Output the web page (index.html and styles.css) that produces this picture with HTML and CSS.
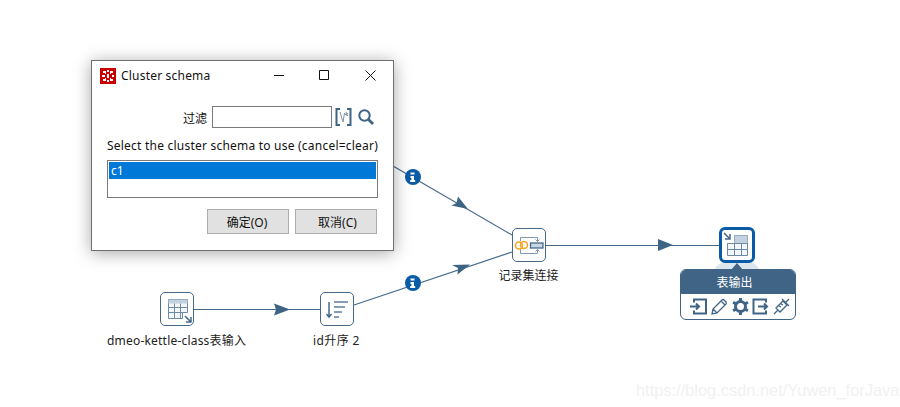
FILE: index.html
```html
<!DOCTYPE html>
<html lang="zh">
<head>
<meta charset="utf-8">
<title>Cluster schema</title>
<link rel="stylesheet" href="styles.css">
</head>
<body>
<main class="canvas">
  <svg class="hops" width="900" height="407" viewBox="0 0 900 407">
    <g class="hop">
      <path d="M393 166L512 235"/>
      <path d="M354 305L512 252"/>
      <path d="M194 309.500H320"/>
      <path d="M546 245.500H719"/>
    </g>
    <g class="arrow">
      <path d="M468 209L451.500 205.500L456.500 203L458 196.500Z"/>
      <path d="M470 264.500L452 265L458 268L457.500 274.500Z"/>
      <path d="M290 309.500L274 303.500L276 309.500L274 315.500Z"/>
      <path d="M673 245L658 239V251Z"/>
    </g>
    <g>
      <circle class="info" cx="413" cy="177" r="8"/>
      <path class="info-i" d="M410.500 172.500h4v2h-4zM410.500 176h3.500v4h1.200v2h-5v-2h1.200v-2h-.9z"/>
      <circle class="info" cx="413" cy="283" r="8"/>
      <path class="info-i" d="M410.500 278.500h4v2h-4zM410.500 282h3.500v4h1.200v2h-5v-2h1.200v-2h-.9z"/>
    </g>
  </svg>

  <div class="node node-input">
    <svg width="32" height="32" viewBox="0 0 32 32">
      <path class="ic-light" d="M7.500 6.500h19v13h-5v6h-14z"/>
      <path class="ic-head" d="M7.500 6.500h19v4h-19z"/>
      <path class="ic-line" d="M7.500 14.500h19M7.500 19.500h14M13.500 10.500v15M19.500 10.500v15"/>
      <path class="ic-arrow" d="M24 23l6 6M30 24v5h-5"/>
    </svg>
  </div>
  <div class="label label-input">dmeo-kettle-class表输入</div>

  <div class="node node-sort">
    <svg width="32" height="32" viewBox="0 0 32 32">
      <path class="ic-arrow" d="M8 9v15M5.500 21l2.500 3 2.500-3"/>
      <path class="ic-line-d" d="M13 9h14M13 14h11M13 19h8M13 24h5"/>
    </svg>
  </div>
  <div class="label label-sort">id升序 2</div>

  <div class="node node-join">
    <svg width="32" height="32" viewBox="0 0 32 32">
      <path class="ic-thin" d="M7.500 12V8.500h17v4M22.500 10.500l2 2 2-2M7.500 20v4.500h17v-4M22.500 22.500l2-2 2 2"/>
      <circle class="ic-ring" cx="6" cy="16.500" r="3.500"/>
      <circle class="ic-ring" cx="11" cy="16" r="3.500"/>
      <rect class="ic-bar" x="17.500" y="14" width="12.500" height="5"/>
    </svg>
  </div>
  <div class="label label-join">记录集连接</div>

  <div class="halo"></div>
  <div class="node node-output">
    <svg width="30" height="30" viewBox="0 0 30 30">
      <path class="ic-light" d="M5.500 13.500h7v-8h13v20h-20z"/>
      <path class="ic-head" d="M12.500 5.500h13v8h-13z"/>
      <path class="ic-line" d="M5.500 19.500h20M12.500 13.500v12M19.500 13.500v12M5.500 13.500h20"/>
      <path class="ic-arrow" d="M2 3l6 6M8 4v5H3"/>
    </svg>
  </div>

  <section class="popup">
    <div class="popup-title">表输出</div>
    <div class="popup-tools">
      <svg width="17" height="17" viewBox="0 0 17 17"><path class="tool" d="M4 4.500V1.500h12v14H4v-3M0 8.500h9M6 5.500l3 3-3 3"/></svg>
      <svg width="17" height="17" viewBox="0 0 17 17"><path class="tool-thin" d="M1 16l1-5L11 2a1.500 1.500 0 0 1 2 0l2 2a1.500 1.500 0 0 1 0 2L6 15zM2 11l4 4M10 3l4 4"/></svg>
      <svg width="17" height="17" viewBox="0 0 17 17"><circle class="tool-gear" cx="8.500" cy="8.500" r="5"/><path class="tool-teeth" d="M8.500 0v3M8.500 14v3M1.100 4.200l2.600 1.500M13.300 11.300l2.600 1.500M1.100 12.800l2.600-1.500M13.300 5.700l2.600-1.500"/></svg>
      <svg width="17" height="17" viewBox="0 0 17 17"><path class="tool" d="M14 4.500V1.500H1.500v14H14v-3M6 8.500h9M12 5.500l3 3-3 3"/></svg>
      <svg width="17" height="17" viewBox="0 0 17 17"><path class="tool-thin" d="M1 16l4-4M3 10l4 4 7-7-4-4zM9 1l7 7M13 4l3-3M6 8l2 1M8 6l2 1"/></svg>
    </div>
  </section>

  <div class="watermark">https://blog.csdn.net/Yuwen_forJava</div>

  <section class="dialog">
    <header class="titlebar">
      <svg class="app-icon" width="16" height="16" viewBox="0 0 16 16">
        <rect width="16" height="16" fill="#c80000"/>
        <path class="app-mark" d="M3 3h3v2H3zM10 3h3v2h-3zM3 11h3v2H3zM10 11h3v2h-3zM7 6h2v4H7zM7 2h2v2H7zM12 7h2v2h-2zM2 7h3v2H2zM7 12h2v2H7zM5 5h1v1H5zM10 5h1v1h-1zM5 10h1v1H5zM10 10h1v1h-1z"/>
      </svg>
      <span class="title">Cluster schema</span>
      <div class="win-buttons">
        <svg width="11" height="11" viewBox="0 0 11 11"><path class="win-glyph" d="M0 5.500h10"/></svg>
        <svg class="win-max" width="11" height="11" viewBox="0 0 11 11"><path class="win-glyph" d="M.5.500h9v9h-9z"/></svg>
        <svg width="11" height="11" viewBox="0 0 11 11"><path class="win-glyph" d="M.5.500l10 10M10.500.500l-10 10"/></svg>
      </div>
    </header>
    <div class="filter-row">
      <label class="filter-label" for="filter">过滤</label>
      <input class="filter-input" id="filter" type="text">
      <svg class="var-icon" width="17" height="18" viewBox="0 0 17 18">
        <path class="var-bracket" d="M5 1H1.500v16H5M12 1h3.500v16H12"/>
        <path class="var-thin" d="M5 4l3 10 1.500-9M11 4l1 3.500M9.800 6.500l3.200-1M13 7.500l-3-1"/>
      </svg>
      <svg class="search-icon" width="18" height="18" viewBox="0 0 18 18">
        <circle class="search-ring" cx="7.500" cy="7.500" r="5.200"/>
        <path class="search-handle" d="M11.500 11.500L16 16"/>
      </svg>
    </div>
    <p class="prompt">Select the cluster schema to use (cancel=clear)</p>
    <div class="listbox"><div class="list-item">c1</div></div>
    <div class="actions">
      <button class="btn" type="button">确定(O)</button>
      <button class="btn btn-cancel" type="button">取消(C)</button>
    </div>
  </section>
</main>
</body>
</html>
```

FILE: styles.css
```css
* { box-sizing: border-box; }
html, body { margin: 0; padding: 0; background: #fff; }
body { font-family: "Noto Sans", "Noto Sans CJK SC", sans-serif; font-size: 12px; color: #111; }

.canvas { position: relative; width: 900px; height: 407px; overflow: hidden; background: #fff; }
.hops { position: absolute; left: 0; top: 0; }
.hop path { fill: none; stroke: #46698a; stroke-width: 1.200; }
.arrow path { fill: #3d6485; }
.info { fill: #0a5ba5; }
.info-i { fill: #fff; }

.node { position: absolute; display: flex; align-items: center; justify-content: center; width: 34px; height: 34px; background: #fff; border: 1px solid #46698a; border-radius: 5px; }
.node-input { left: 160px; top: 292px; }
.node-sort { left: 320px; top: 292px; }
.node-join { left: 512px; top: 228px; }
.node-output { left: 719px; top: 227px; width: 36px; height: 36px; border: 3px solid #0a5ba5; border-radius: 6px; }

.ic-light { fill: #f4f7f9; stroke: #6d8aa4; stroke-width: 1; }
.ic-head { fill: #c3d1de; }
.ic-line { fill: none; stroke: #6d8aa4; stroke-width: 1; }
.ic-line-d { fill: none; stroke: #5d7c98; stroke-width: 1.300; }
.ic-arrow { fill: none; stroke: #46698a; stroke-width: 1.500; }
.ic-thin { fill: none; stroke: #7f99b0; stroke-width: 1; }
.ic-ring { fill: none; stroke: #f5a623; stroke-width: 1.600; }
.ic-bar { fill: #c7d6e3; stroke: #46698a; stroke-width: 1.300; }

.label { position: absolute; top: 333px; font-size: 12px; line-height: 16px; white-space: nowrap; color: #222; }
.label-input { left: 107px; letter-spacing: .2px; }
.label-sort { left: 313px; letter-spacing: .4px; }
.label-join { left: 498.500px; top: 268px; }

.halo { position: absolute; left: 714px; top: 262px; width: 46px; height: 14px; background: #dbe6ef; border-radius: 12px 12px 0 0; }
.popup { position: absolute; left: 680px; top: 269px; width: 116px; height: 51px; background: #fff; border: 1px solid #3f6485; border-radius: 6px; }
.popup::before { content: ""; position: absolute; left: 50px; top: -7px; border-left: 6px solid transparent; border-right: 6px solid transparent; border-bottom: 7px solid #3f6485; }
.popup-title { height: 24px; padding-right: 7px; background: #3f6485; color: #fff; font-size: 12px; line-height: 25px; text-align: center; border-radius: 5px 5px 0 0; }
.popup-tools { display: flex; justify-content: space-between; padding: 4px 5px 0 9px; }
.tool { fill: none; stroke: #3f6485; stroke-width: 2; }
.tool-thin { fill: none; stroke: #3f6485; stroke-width: 1.300; }
.tool-gear { fill: none; stroke: #3f6485; stroke-width: 3; }
.tool-teeth { fill: none; stroke: #3f6485; stroke-width: 3; }

.watermark { position: absolute; left: 636px; top: 380px; font-family: "Liberation Sans", sans-serif; font-size: 16.400px; line-height: 20px; color: #f1f1f1; white-space: nowrap; }

.dialog { position: absolute; left: 91px; top: 60px; width: 303px; height: 191px; display: flex; flex-direction: column; background: #fff; border: 1px solid #6f6f6f; box-shadow: 0 2px 16px rgba(0, 0, 0, .35); }
.titlebar { display: flex; align-items: center; height: 28px; padding: 1px 0 0 8px; }
.app-icon { flex: none; }
.app-mark { fill: #fff; }
.title { margin-left: 5px; font-size: 12px; letter-spacing: .2px; color: #111; }
.win-buttons { display: flex; gap: 34px; margin-left: auto; padding-right: 17px; }
.win-max { margin-right: 1px; }
.win-glyph { fill: none; stroke: #111; stroke-width: 1; }

.filter-row { display: flex; align-items: center; height: 22px; margin-top: 17px; padding-left: 91px; }
.filter-label { width: 29px; font-size: 12px; padding-top: 2px; }
.filter-input { width: 120px; height: 22px; margin: 0; padding: 0 3px; border: 1px solid #7a7a7a; background: #fff; outline: none; }
.var-icon { margin-left: 3px; }
.var-bracket { fill: none; stroke: #3f6485; stroke-width: 2; }
.var-thin { fill: none; stroke: #7d95aa; stroke-width: 1; }
.search-icon { margin-left: 5px; }
.search-ring { fill: none; stroke: #3f6485; stroke-width: 2; }
.search-handle { fill: none; stroke: #3f6485; stroke-width: 2.800; }

.prompt { margin: 10px 0 0 15px; font-size: 12px; line-height: 16px; letter-spacing: .22px; white-space: nowrap; color: #111; }
.listbox { width: 271px; height: 38px; margin: 6px 0 0 15px; padding: 1px; border: 1px solid #7a7a7a; background: #fff; }
.list-item { height: 17px; padding-left: 2px; background: #0078d7; color: #fff; font-size: 12px; line-height: 17px; }
.actions { display: flex; justify-content: flex-end; gap: 6px; margin-top: 11px; padding-right: 16px; }
.btn { width: 82px; height: 25px; padding: 0 2px 0 0; background: #e1e1e1; border: 1px solid #adadad; color: #111; font-family: "Noto Sans", "Noto Sans CJK SC", sans-serif; font-size: 12px; }
.btn-cancel { padding: 0 0 0 3px; }
```
